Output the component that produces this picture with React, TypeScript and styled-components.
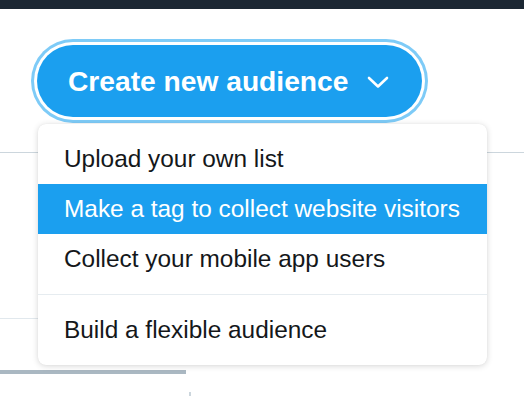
import styled, { createGlobalStyle } from "styled-components";

const GlobalStyle = createGlobalStyle`
  body {
    margin: 0;
    background: #ffffff;
    font-family: "Liberation Sans", Arial, Helvetica, sans-serif;
  }
`;

const options = [
  { label: "Upload your own list" },
  { label: "Make a tag to collect website visitors", active: true },
  { label: "Collect your mobile app users" },
];

export default function App() {
  return (
    <>
      <GlobalStyle />
      <Page>
        <TopBar />
        <Header>
          <CreateButton>
            Create new audience
            <svg width="22" height="14" viewBox="0 0 22 14" fill="none">
              <polyline
                points="2,3 11,11.5 20,3"
                stroke="#ffffff"
                strokeWidth="2.6"
                strokeLinecap="round"
                strokeLinejoin="round"
              />
            </svg>
          </CreateButton>
          <Menu>
            {options.map((o) => (
              <MenuItem key={o.label} $active={o.active}>
                {o.label}
              </MenuItem>
            ))}
            <Separator />
            <MenuItem>Build a flexible audience</MenuItem>
          </Menu>
        </Header>
        <Divider />
        <TableRow />
        <ScrollBar />
        <Tick />
      </Page>
    </>
  );
}

const Page = styled.div`
  width: 524px;
  height: 396px;
  overflow: hidden;
  background: #ffffff;
`;

const TopBar = styled.div`
  height: 9px;
  background: #1c2733;
`;

const Header = styled.div`
  position: relative;
  padding: 36px 0 35px 37px;
`;

const CreateButton = styled.button`
  display: flex;
  align-items: center;
  gap: 19px;
  height: 72px;
  padding: 0 33px 0 31px;
  border: none;
  border-radius: 36px;
  background: #1b9fef;
  color: #ffffff;
  font-family: "Liberation Sans", Arial, Helvetica, sans-serif;
  font-size: 28.2px;
  font-weight: 700;
  box-shadow: 0 0 0 3px #ffffff, 0 0 0 6px #7ecbf7;
  cursor: pointer;

  svg {
    margin-top: 1px;
  }
`;

const Menu = styled.ul`
  position: absolute;
  top: 115px;
  left: 38px;
  width: 449px;
  margin: 0;
  padding: 10px 0;
  list-style: none;
  background: #ffffff;
  border-radius: 8px;
  box-shadow: 0 1px 6px rgba(0, 0, 0, 0.16), 0 0 1px rgba(0, 0, 0, 0.08);
  z-index: 2;
`;

const MenuItem = styled.li<{ $active?: boolean }>`
  display: flex;
  align-items: center;
  height: 50px;
  padding: 0 26px;
  font-size: 24.4px;
  color: ${(p) => (p.$active ? "#ffffff" : "#14171a")};
  background: ${(p) => (p.$active ? "#1b9fef" : "transparent")};
  white-space: nowrap;
`;

const Separator = styled.li`
  height: 1px;
  margin: 10px 0;
  background: #e6ecf0;
`;

const Divider = styled.div`
  height: 1px;
  background: #ccd6dd;
`;

const TableRow = styled.div`
  width: 300px;
  height: 165px;
  border-bottom: 1px solid #e1e8ed;
`;

const ScrollBar = styled.div`
  width: 186px;
  height: 4px;
  margin-top: 51px;
  background: #aab8c2;
`;

const Tick = styled.div`
  width: 2px;
  height: 6px;
  margin: 18px 0 0 189px;
  background: #ccd6dd;
`;
